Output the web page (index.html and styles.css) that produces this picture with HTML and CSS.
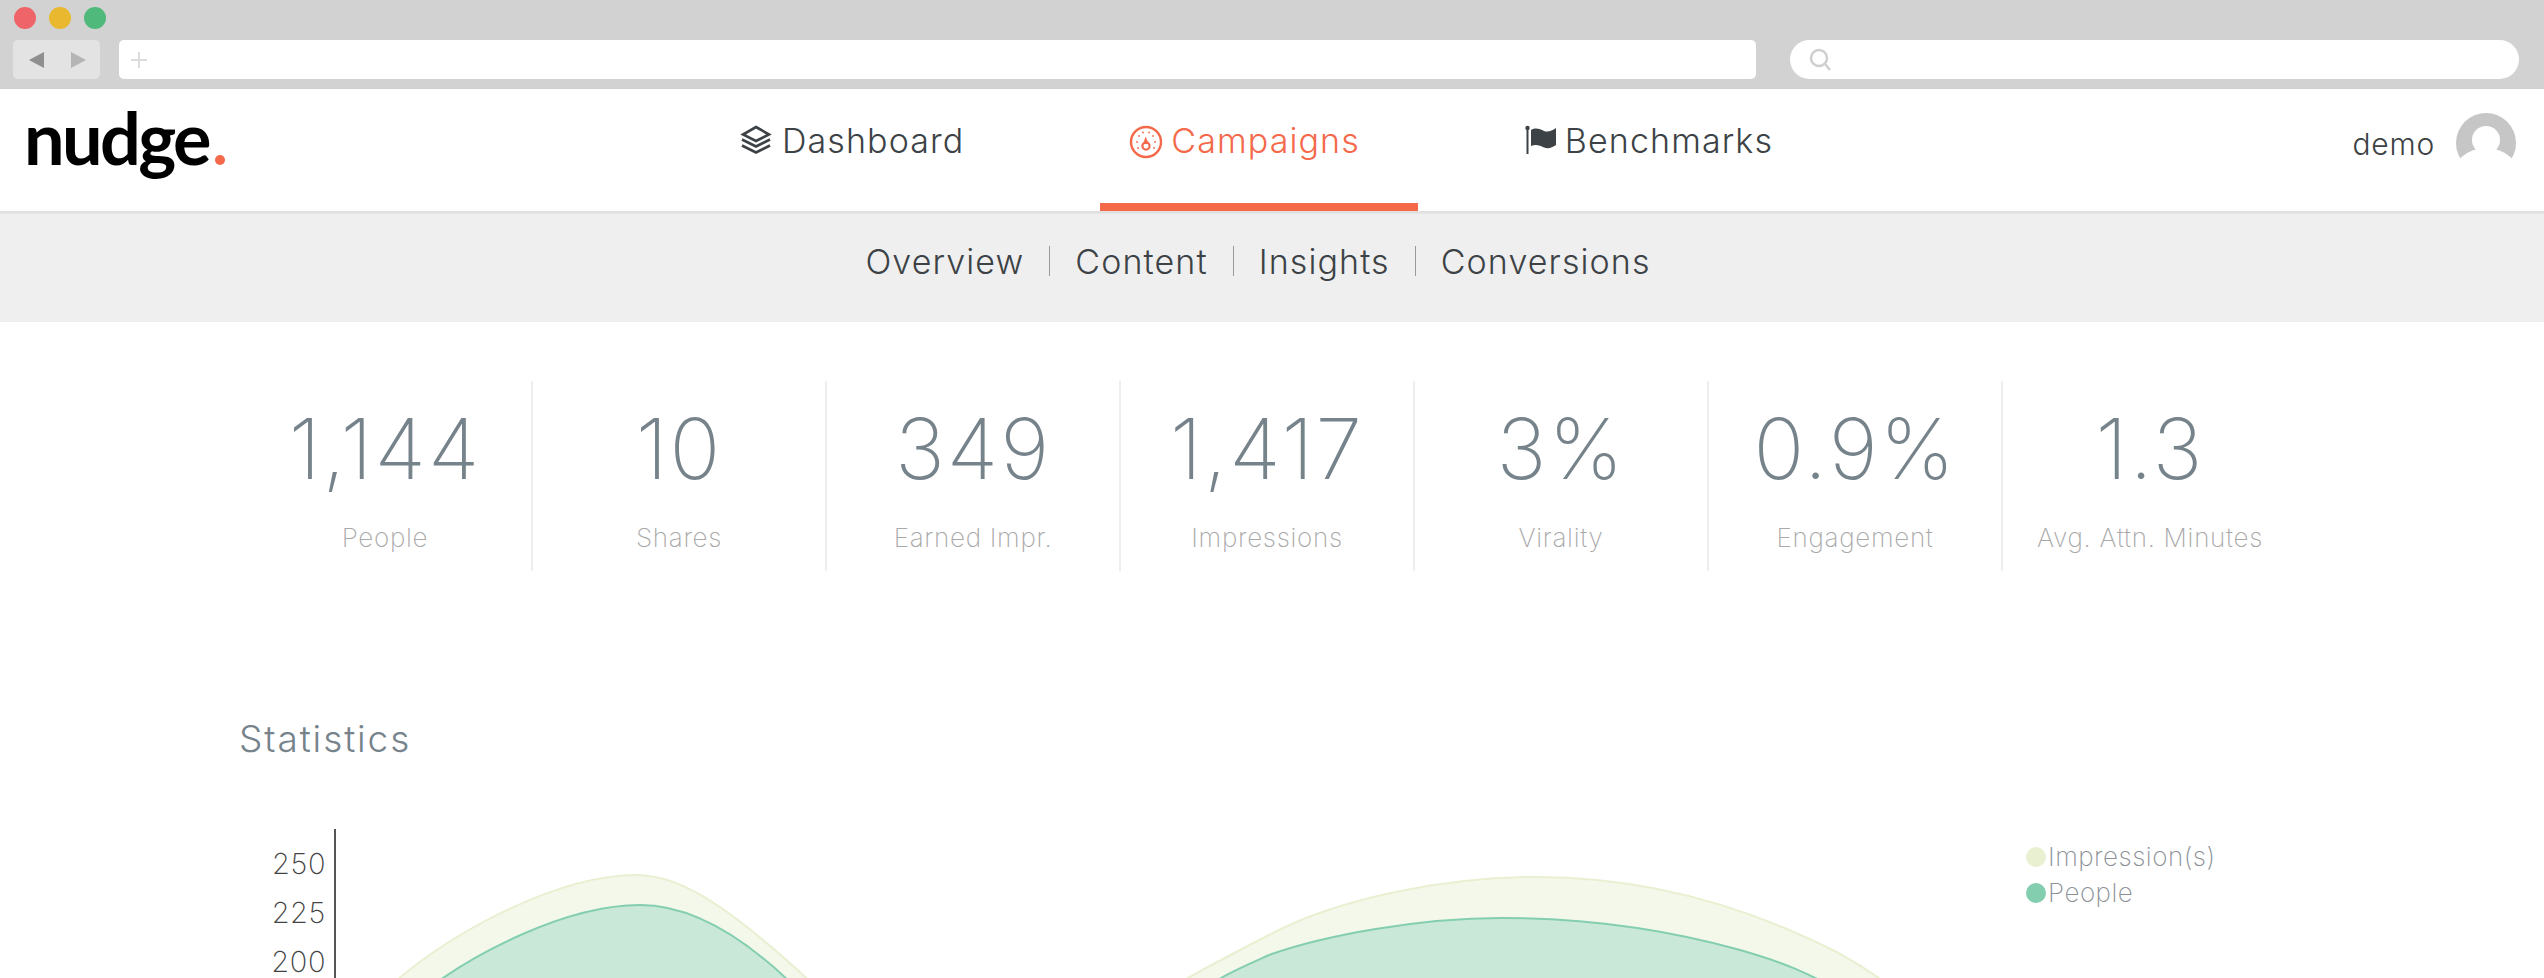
FILE: index.html
```html
<!DOCTYPE html>
<html lang="en">
<head>
<meta charset="utf-8">
<title>nudge</title>
<link rel="stylesheet" href="styles.css">
</head>
<body>
<div class="chrome">
  <div class="lights"><span class="light red"></span><span class="light yellow"></span><span class="light green"></span></div>
  <div class="toolbar">
    <div class="arrows"><span class="arrow back"></span><span class="arrow fwd"></span></div>
    <div class="address"><svg class="plus" width="18" height="18" viewBox="0 0 18 18"><path d="M9 1v16M1 9h16" stroke="#dcdcdc" stroke-width="2" fill="none"/></svg></div>
    <div class="search"><svg class="lens" width="24" height="26" viewBox="0 0 24 26"><circle cx="11" cy="11" r="8" fill="none" stroke="#cfcfcf" stroke-width="2.5"/><path d="M17 17l5 6" stroke="#cfcfcf" stroke-width="2.5"/></svg></div>
  </div>
</div>
<header class="topbar">
  <div class="brand"><span class="logo">nudge<span class="logo-dot"></span></span></div>
  <nav class="mainnav">
    <a class="tab">
      <svg class="ico" width="32" height="30" viewBox="0 0 32 30"><g fill="none" stroke="#3c4245" stroke-width="2.6" stroke-linejoin="miter"><path d="M16 2L29 9.500L16 16L3 9.500Z"/><path d="M2 14.500L16 21.500L30 14.500"/><path d="M2 20.500L16 27.500L30 20.500"/></g></svg>
      <span>Dashboard</span>
    </a>
    <a class="tab active">
      <svg class="ico" width="34" height="34" viewBox="0 0 34 34"><circle cx="17" cy="17" r="15" fill="none" stroke="#f4694a" stroke-width="2.400"/><circle cx="17" cy="21" r="3.600" fill="none" stroke="#f4694a" stroke-width="2.200"/><path d="M14.200 19L16.500 11.500L19.800 19Z" fill="#f4694a"/><g fill="#f4694a"><circle cx="8" cy="17" r=".9"/><circle cx="10" cy="11" r=".9"/><circle cx="14" cy="7.500" r=".9"/><circle cx="20" cy="7.500" r=".9"/><circle cx="24" cy="11" r=".9"/><circle cx="26" cy="17" r=".9"/><circle cx="9" cy="23" r=".9"/><circle cx="25" cy="23" r=".9"/></g></svg>
      <span>Campaigns</span>
    </a>
    <a class="tab">
      <svg class="ico" width="32" height="30" viewBox="0 0 32 30"><path d="M2.500 3v26" stroke="#3c4245" stroke-width="2" fill="none"/><circle cx="2.500" cy="3" r="2.200" fill="#3c4245"/><path d="M6 5C11 2 15 4 19 6C23 7.500 27 6 31 3V20C27 23 23 24 19 22.500C15 20.500 11 19 6 21Z" fill="#3c4245"/></svg>
      <span>Benchmarks</span>
    </a>
  </nav>
  <div class="user">
    <span class="username">demo</span>
    <svg class="avatar" width="60" height="60" viewBox="0 0 60 60"><circle cx="30" cy="30" r="30" fill="#c6c6c6"/><circle cx="30" cy="27" r="14" fill="#fff"/><ellipse cx="30" cy="65" rx="34" ry="30" fill="#fff"/></svg>
  </div>
</header>
<nav class="subnav">
  <a class="sub">Overview</a><i class="sep"></i><a class="sub">Content</a><i class="sep"></i><a class="sub">Insights</a><i class="sep"></i><a class="sub">Conversions</a>
</nav>
<main class="content">
  <section class="stats">
    <div class="stat"><div class="num">1,144</div><div class="lbl">People</div></div>
    <div class="stat"><div class="num">10</div><div class="lbl">Shares</div></div>
    <div class="stat"><div class="num">349</div><div class="lbl">Earned Impr.</div></div>
    <div class="stat"><div class="num">1,417</div><div class="lbl">Impressions</div></div>
    <div class="stat"><div class="num">3%</div><div class="lbl">Virality</div></div>
    <div class="stat"><div class="num">0.9%</div><div class="lbl">Engagement</div></div>
    <div class="stat"><div class="num">1.3</div><div class="lbl">Avg. Attn. Minutes</div></div>
  </section>
  <h2 class="heading">Statistics</h2>
  <section class="chart">
    <div class="yaxis"><span>250</span><span>225</span><span>200</span></div>
    <svg class="plot" width="1680" height="149" viewBox="336 829 1680 149">
      <g class="outer">
        <path d="M380 995C450 930 560 875 637 875C680 875 730 905 830 1000Z"/>
        <path d="M1145 1003C1185 978 1230 955 1269 935C1340 897 1450 877 1536 877C1620 877 1700 893 1782 927C1820 943 1860 960 1910 1002Z"/>
      </g>
      <g class="inner">
        <path d="M420 995C470 955 565 905 640 905C690 905 745 935 805 997Z"/>
        <path d="M1190 1000C1215 978 1240 968 1269 955C1325 935 1420 918 1501 918C1570 918 1650 925 1740 950C1775 960 1812 972 1858 1003Z"/>
      </g>
    </svg>
    <ul class="legend">
      <li><i class="swatch pale"></i>Impression(s)</li>
      <li><i class="swatch mint"></i>People</li>
    </ul>
  </section>
</main>
</body>
</html>
```
FILE: styles.css
```css
* { box-sizing: border-box; }
html, body { margin: 0; padding: 0; }
body {
  width: 2544px;
  height: 978px;
  overflow: hidden;
  background: #fff;
  font-family: Inter, "Liberation Sans", sans-serif;
}
a { color: inherit; text-decoration: none; }

.chrome { height: 89px; background: #d2d2d2; padding: 7px 25px 10px 13px; }
.lights { display: flex; gap: 13px; height: 22px; margin-left: 1px; margin-bottom: 11px; }
.light { width: 22px; height: 22px; border-radius: 50%; }
.red { background: #ef6468; }
.yellow { background: #e9b82f; }
.green { background: #4fb97c; }
.toolbar { display: flex; height: 39px; }
.arrows { width: 87px; background: #e3e3e3; border-radius: 5px; display: flex; align-items: center; padding-left: 16px; gap: 27px; margin-right: 19px; }
.arrow { width: 0; height: 0; border-top: 8px solid transparent; border-bottom: 8px solid transparent; }
.back { border-right: 15px solid #8f8f8f; }
.fwd { border-left: 15px solid #b5b5b5; }
.address { flex: 1; background: #fff; border-radius: 5px; display: flex; align-items: center; padding-left: 11px; margin-right: 34px; }
.search { width: 729px; background: #fff; border-radius: 20px; display: flex; align-items: center; padding-left: 18px; }

.topbar { height: 123px; display: flex; box-shadow: 0 1px 2px rgba(0,0,0,.1); position: relative; border-bottom: 1px solid #e0e0e0; }
.brand { width: 711px; padding: 11px 0 0 24px; }
.logo { font-family: Lato, sans-serif; font-weight: 700; font-size: 72px; line-height: 74px; color: #000; letter-spacing: -2.6px; display: inline-flex; align-items: baseline; }
.logo-dot { width: 10px; height: 10px; border-radius: 50%; background: #f4694a; margin-left: 6px; }
.mainnav { display: flex; gap: 75px; }
.tab { height: 122px; padding: 35px 58px 0 29px; display: flex; align-items: flex-start; gap: 8px; font-size: 34px; line-height: 34px; letter-spacing: 1.1px; color: #3c4245; font-weight: 300; }
.tab:first-child { gap: 10px; padding-right: 61px; }
.tab:last-child { padding-left: 32px; }
.tab .ico { flex: none; margin-top: 1px; }
.tab.active { color: #f4694a; border-bottom: 8px solid #f4694a; }
.user { margin-left: auto; padding: 24px 28px 0 0; display: flex; align-items: flex-start; gap: 21px; }
.username { font-size: 30px; line-height: 40px; margin-top: 11px; color: #3c4245; letter-spacing: .8px; font-weight: 300; }
.avatar { display: block; }

.subnav { height: 110px; background: #efefef; display: flex; justify-content: center; align-items: center; color: #3c4245; font-size: 34px; letter-spacing: 1.1px; font-weight: 300; padding: 0 28px 12px 0; }
.sep { width: 1px; height: 30px; background: #9a9a9a; margin: 0 25px; }

.content { padding: 59px 248px 0 239px; }
.stats { display: grid; grid-template-columns: repeat(7, 294px); height: 190px; }
.stat { text-align: center; border-right: 2px solid #eeeeee; padding-top: 23px; }
.stat:last-child { border-right: 0; }
.num { font-size: 84px; line-height: 90px; font-weight: 150; color: #76838b; letter-spacing: 2px; }
.lbl { margin-top: 28px; font-size: 26px; line-height: 32px; font-weight: 200; color: #a9a9a9; letter-spacing: .7px; }

.heading { margin: 146px 0 0; font-size: 37px; line-height: 44px; font-weight: 300; color: #76838b; letter-spacing: 1.9px; }
.chart { display: flex; height: 149px; margin: 68px 0 0 0; position: relative; }
.yaxis { width: 97px; flex: none; border-right: 2px solid #555; display: flex; flex-direction: column; align-items: flex-end; padding: 20px 8px 0 0; font-size: 29px; font-weight: 150; color: #444; line-height: 30px; gap: 19px; letter-spacing: .6px; }
.plot { flex: none; display: block; }
.outer path { fill: #f4f8ea; stroke: #e9f0d2; stroke-width: 2; }
.inner path { fill: #cae8d7; stroke: #84ceb0; stroke-width: 2; }
.legend { list-style: none; margin: 0; padding: 0; position: absolute; left: 1787px; top: 10px; font-size: 26px; font-weight: 200; color: #8b9197; line-height: 36px; letter-spacing: .5px; }
.legend li { display: flex; align-items: center; gap: 2px; }
.swatch { width: 20px; height: 20px; border-radius: 50%; }
.pale { background: #e9f0d2; }
.mint { background: #84ceb0; }
```
